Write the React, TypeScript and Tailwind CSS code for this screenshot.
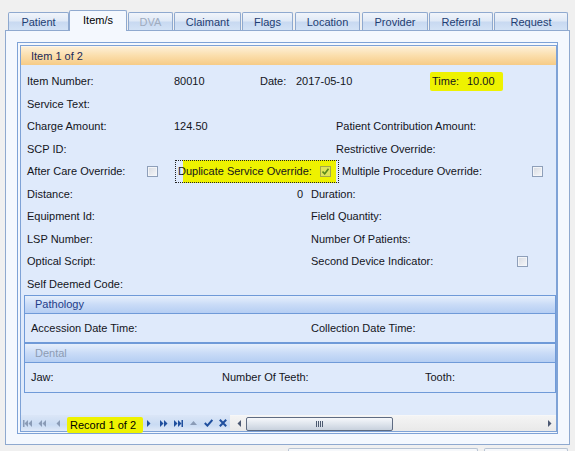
import React from 'react';

// Tab strip, widths/margins measured from the reference
const tabs = [
  { label: 'Patient', cls: 'w-[61px]' },
  { label: 'Item/s', cls: 'w-[58px]', active: true },
  { label: 'DVA', cls: 'ml-[1px] w-[45px]', disabled: true },
  { label: 'Claimant', cls: 'ml-[1px] w-[67px]' },
  { label: 'Flags', cls: 'ml-[1px] w-[51px]' },
  { label: 'Location', cls: 'ml-[2px] w-[65px]' },
  { label: 'Provider', cls: 'ml-[2px] w-[66px]' },
  { label: 'Referral', cls: 'ml-[1px] w-[64px]' },
  { label: 'Request', cls: 'ml-[1px] w-[74px]' },
];

const Check = ({ checked }: { checked?: boolean }) =>
  checked ? (
    <span className="flex h-[11px] w-[11px] shrink-0 items-center justify-center border border-[#a3a84a] bg-[#dfe35a]">
      <svg width="7" height="7" viewBox="0 0 7 7">
        <path d="M0.5 3.5 L2.7 5.8 L6.5 0.8" fill="none" stroke="#5b8a1a" strokeWidth="1.6" />
      </svg>
    </span>
  ) : (
    <span className="h-[11px] w-[11px] shrink-0 border border-[#8e9fb9] bg-[linear-gradient(135deg,#d6dae1,#f7f8fa)] shadow-[inset_0_0_0_1px_#f3f5f8]" />
  );

const Row = ({ children }: { children: React.ReactNode }) => (
  <div className="flex h-[22.5px] items-center whitespace-nowrap pl-[6px]">{children}</div>
);

const dim = '#8a9bb6';
const nav = '#1f4f9e';

const NavIcon = ({ kind }: { kind: string }) => {
  switch (kind) {
    case 'first':
      return (
        <svg width="9" height="7" viewBox="0 0 9 7">
          <rect x="0" y="0" width="1.5" height="7" fill={dim} />
          <polygon points="5,0 1.5,3.5 5,7" fill={dim} />
          <polygon points="9,0 5.5,3.5 9,7" fill={dim} />
        </svg>
      );
    case 'prevPage':
      return (
        <svg width="8" height="7" viewBox="0 0 8 7">
          <polygon points="4,0 0.5,3.5 4,7" fill={dim} />
          <polygon points="8,0 4.5,3.5 8,7" fill={dim} />
        </svg>
      );
    case 'prev':
      return (
        <svg width="4" height="7" viewBox="0 0 4 7">
          <polygon points="4,0 0.5,3.5 4,7" fill={dim} />
        </svg>
      );
    case 'next':
      return (
        <svg width="4" height="7" viewBox="0 0 4 7">
          <polygon points="0,0 3.5,3.5 0,7" fill={nav} />
        </svg>
      );
    case 'nextPage':
      return (
        <svg width="8" height="7" viewBox="0 0 8 7">
          <polygon points="0,0 3.5,3.5 0,7" fill={nav} />
          <polygon points="4,0 7.5,3.5 4,7" fill={nav} />
        </svg>
      );
    case 'last':
      return (
        <svg width="9" height="7" viewBox="0 0 9 7">
          <polygon points="0,0 3.5,3.5 0,7" fill={nav} />
          <polygon points="4,0 7.5,3.5 4,7" fill={nav} />
          <rect x="7.5" y="0" width="1.5" height="7" fill={nav} />
        </svg>
      );
    case 'up':
      return (
        <svg width="7" height="4" viewBox="0 0 7 4">
          <polygon points="0,4 3.5,0 7,4" fill={dim} />
        </svg>
      );
    case 'ok':
      return (
        <svg width="9" height="8" viewBox="0 0 9 8">
          <path d="M0.8 4 L3.4 6.6 L8.3 1" fill="none" stroke={nav} strokeWidth="2" />
        </svg>
      );
    default:
      return (
        <svg width="8" height="8" viewBox="0 0 8 8">
          <path d="M0.8 0.8 L7.2 7.2 M7.2 0.8 L0.8 7.2" stroke={nav} strokeWidth="2" />
        </svg>
      );
  }
};

export default function App() {
  return (
    <div className="h-[451px] w-[575px] overflow-hidden bg-[#f0f0f0] font-['Liberation_Sans',Arial,sans-serif] text-[11px] text-[#14151c]">
      {/* tabs */}
      <div className="flex h-[30px] items-end pl-[8px] pt-[10px]">
        {tabs.map((t) =>
          t.active ? (
            <div
              key={t.label}
              className={`relative z-10 -mb-px flex h-[21px] items-center justify-center rounded-t-[2px] border border-b-0 border-[#8fa9cf] bg-[#f4f8fe] pb-[1px] text-black ${t.cls}`}
            >
              {t.label}
            </div>
          ) : (
            <div
              key={t.label}
              className={`flex h-[18px] items-center justify-center rounded-t-[2px] border border-b-0 border-[#8fa9cf] bg-[linear-gradient(#f1f5fb,#e0e9f6_45%,#c8d9f1_55%,#d3e2f5)] pt-[2px] ${t.disabled ? 'text-[#9fabbe]' : 'text-[#1e3d72]'} ${t.cls}`}
            >
              {t.label}
            </div>
          )
        )}
      </div>

      {/* tab page */}
      <div className="ml-[5px] h-[415px] w-[565px] border border-[#8fa9cf] bg-[#f4f8fe] p-[11px]">
        <div className="flex h-[392px] w-[541px] border border-[#7ea2d6] pb-[1px] pl-[2px] pt-[2px]">
          <div className="flex flex-1 flex-col border border-[#7ea2d6] bg-[#dfeafb]">
            <div className="flex h-[19px] items-center border-t border-[#fdf6ea] bg-[linear-gradient(#fdefd6,#fbdfae_45%,#f6cb86)] pl-[10px] text-[#1b2a58]">
              Item 1 of 2
            </div>

            <div className="pt-[5px]">
              <Row>
                <span className="w-[147px]">Item Number:</span>
                <span className="w-[86px]">80010</span>
                <span className="w-[36px]">Date:</span>
                <span className="w-[134px]">2017-05-10</span>
                <span className="flex h-[19px] w-[73px] items-center rounded-[2px] bg-[#eef200] pl-[2px]">
                  <span className="w-[35px]">Time:</span>10.00
                </span>
              </Row>
              <Row>
                <span>Service Text:</span>
              </Row>
              <Row>
                <span className="w-[147px]">Charge Amount:</span>
                <span className="w-[162px]">124.50</span>
                <span>Patient Contribution Amount:</span>
              </Row>
              <Row>
                <span className="w-[309px]">SCP ID:</span>
                <span>Restrictive Override:</span>
              </Row>
              <Row>
                <span className="w-[120px]">After Care Override:</span>
                <Check />
                <span className="ml-[17px] flex h-[23px] w-[164px] items-center border border-dotted border-[#222] bg-[linear-gradient(90deg,transparent_7px,#eef200_7px,#eef200_160px,transparent_160px)] pl-[2px]">
                  <span className="w-[142px]">Duplicate Service Override:</span>
                  <Check checked />
                </span>
                <span className="ml-[3px] w-[190px]">Multiple Procedure Override:</span>
                <Check />
              </Row>
              <Row>
                <span className="flex w-[276px] justify-between">
                  <span>Distance:</span>
                  <span>0</span>
                </span>
                <span className="ml-[8px]">Duration:</span>
              </Row>
              <Row>
                <span className="w-[284px]">Equipment Id:</span>
                <span>Field Quantity:</span>
              </Row>
              <Row>
                <span className="w-[284px]">LSP Number:</span>
                <span>Number Of Patients:</span>
              </Row>
              <Row>
                <span className="w-[284px]">Optical Script:</span>
                <span className="w-[206px]">Second Device Indicator:</span>
                <Check />
              </Row>
              <Row>
                <span>Self Deemed Code:</span>
              </Row>
            </div>

            {/* Pathology */}
            <div className="ml-[3px] border border-[#6f9ad8]">
              <div className="flex h-[18px] items-center border-b border-[#6f9ad8] bg-[linear-gradient(#e6effc,#cadcf7_50%,#b5cef3)] pl-[10px] text-[#1f3c88]">
                Pathology
              </div>
              <div className="flex h-[28px] items-center pl-[6px]">
                <span className="w-[280px]">Accession Date Time:</span>
                <span>Collection Date Time:</span>
              </div>
            </div>

            {/* Dental */}
            <div className="ml-[3px] border border-[#6f9ad8]">
              <div className="flex h-[19px] items-center border-b border-[#6f9ad8] bg-[linear-gradient(#e6effc,#cadcf7_50%,#b5cef3)] pl-[10px] text-[#8d9cb3]">
                Dental
              </div>
              <div className="flex h-[29px] items-center pl-[6px]">
                <span className="w-[191px]">Jaw:</span>
                <span className="w-[203px]">Number Of Teeth:</span>
                <span>Tooth:</span>
              </div>
            </div>

            {/* navigator */}
            <div className="mt-auto flex h-[16px] items-center bg-[linear-gradient(#dbe6f7,#c9dbf3_60%,#dfe9f8)]">
              <span className="ml-[2px] flex"><NavIcon kind="first" /></span>
              <span className="ml-[6px] flex"><NavIcon kind="prevPage" /></span>
              <span className="ml-[10px] flex"><NavIcon kind="prev" /></span>
              <span className="ml-[7px] mt-[4px] flex h-[16px] w-[76px] items-center rounded-[2px] bg-[#eef200] pl-[3px] text-black">
                Record 1 of 2
              </span>
              <span className="ml-[4px] flex"><NavIcon kind="next" /></span>
              <span className="ml-[9px] flex"><NavIcon kind="nextPage" /></span>
              <span className="ml-[6px] flex"><NavIcon kind="last" /></span>
              <span className="ml-[7px] flex"><NavIcon kind="up" /></span>
              <span className="ml-[7px] flex"><NavIcon kind="ok" /></span>
              <span className="ml-[6px] flex"><NavIcon kind="cancel" /></span>

              {/* horizontal scrollbar */}
              <div className="ml-[3px] flex h-[16px] flex-1 items-center border-t border-[#f7f7f7] bg-[linear-gradient(#f4f4f4,#e9e9e9)]">
                <svg className="ml-[7px]" width="4" height="7" viewBox="0 0 4 7">
                  <polygon points="4,0 0.5,3.5 4,7" fill="#4c5872" />
                </svg>
                <div className="ml-[5px] flex h-[14px] w-[147px] items-center justify-center rounded-[2px] border border-[#5e6b82] bg-[linear-gradient(#f6f8fb,#dfe5ed_50%,#c8d1dd)]">
                  <svg width="8" height="6" viewBox="0 0 8 6">
                    <path d="M0.5 0 V6 M2.5 0 V6 M4.5 0 V6 M6.5 0 V6" stroke="#4d5a70" strokeWidth="1" />
                  </svg>
                </div>
                <div className="flex-1" />
                <svg className="mr-[4px]" width="4" height="7" viewBox="0 0 4 7">
                  <polygon points="0,0 3.5,3.5 0,7" fill="#4c5872" />
                </svg>
              </div>
            </div>
          </div>
        </div>
      </div>

      {/* tops of controls below the tab page */}
      <div className="flex pt-[3px]">
        <div className="ml-[288px] h-[5px] w-[190px] rounded-t-[2px] border border-b-0 border-[#b8c4d4] bg-[#f6f8fb]" />
        <div className="ml-[6px] h-[5px] w-[84px] rounded-t-[2px] border border-b-0 border-[#b8c4d4] bg-[#f6f8fb]" />
      </div>
    </div>
  );
}
